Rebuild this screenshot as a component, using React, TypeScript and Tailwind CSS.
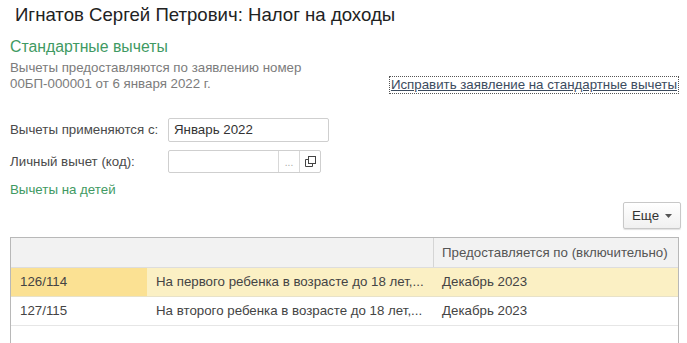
export default function App() {
  return (
    <div className="w-[687px] h-[343px] overflow-hidden bg-white text-[#333] font-['Liberation_Sans',Arial,sans-serif] relative">
      <h1 className="pl-[15px] pt-[3px] text-[18.6px] leading-[24px] text-[#222]">
        Игнатов Сергей Петрович: Налог на доходы
      </h1>

      <div className="pl-[10px] mt-[11px] text-[15.8px] leading-[18px] text-[#3f9a63]">Стандартные вычеты</div>

      <div className="flex items-end pl-[10px] pr-[8px] mt-[4px]">
        <div className="text-[13.3px] leading-[16px] text-[#7c7c7c]">
          Вычеты предоставляются по заявлению номер
          <br />
          00БП-000001 от 6 января 2022 г.
        </div>
        <a
          href="#"
          className="ml-auto mb-[-2px] px-[1px] border border-dotted border-[#555] text-[13.3px] leading-[16px] text-[#3b4b5e] underline"
        >
          Исправить заявление на стандартные вычеты
        </a>
      </div>

      <div className="pl-[10px] mt-[26px] flex items-center h-[24px]">
        <span className="w-[158px] text-[13.3px] text-[#4a4a4a]">Вычеты применяются с:</span>
        <div className="w-[161px] h-[24px] border border-[#cfcfcf] rounded-[2px] px-[5px] text-[13.3px] leading-[22px] text-[#333]">
          Январь 2022
        </div>
      </div>

      <div className="pl-[10px] mt-[8px] flex items-center h-[23px]">
        <span className="w-[158px] text-[13.3px] text-[#4a4a4a]">Личный вычет (код):</span>
        <div className="flex w-[153px] h-[23px] border border-[#cfcfcf] rounded-[2px]">
          <div className="flex-1" />
          <div className="w-[21px] border-l border-[#d8d8d8] flex items-center justify-center text-[10px] text-[#aaa] pt-[2px]">...</div>
          <div className="w-[21px] border-l border-[#d8d8d8] flex items-center justify-center">
            <svg width="11" height="11" viewBox="0 0 11 11" fill="none" stroke="#444" strokeWidth="1">
              <rect x="3.5" y="0.5" width="7" height="7" />
              <path d="M3.5 3.5H0.5V10.5H7.5V7.5" />
            </svg>
          </div>
        </div>
      </div>

      <div className="pl-[10px] mt-[9px] text-[13.3px] leading-[16px] text-[#3f9a63]">Вычеты на детей</div>

      <div className="flex justify-end pr-[6px] mt-[4px]">
        <button className="h-[27px] w-[58px] border border-[#c8c8c8] rounded-[2px] bg-gradient-to-b from-white to-[#f0f0f0] shadow-[0_1px_1px_rgba(0,0,0,0.12)] text-[13.3px] text-[#333] flex items-center justify-center gap-[6px]">
          Еще
          <svg width="7" height="4" viewBox="0 0 7 4">
            <path d="M0 0H7L3.5 4Z" fill="#555" />
          </svg>
        </button>
      </div>

      <div className="ml-[10px] mr-[8px] mt-[8px] border border-[#b8b8b8] h-[120px]">
        <div className="flex h-[30px] bg-[#f2f2f2] border-b border-[#ddd] text-[13.3px] text-[#555]">
          <div className="w-[422px]" />
          <div className="flex-1 border-l border-[#d5d5d5] pl-[8px] flex items-center">Предоставляется по (включительно)</div>
        </div>
        <div className="flex h-[29px] bg-[#fbf0c4] border-b border-[#e8e2c8] text-[13.3px] text-[#444] items-stretch">
          <div className="w-[136px] bg-[#fbe193] pl-[9px] flex items-center">126/114</div>
          <div className="w-[286px] pl-[9px] flex items-center whitespace-nowrap">На первого ребенка в возрасте до 18 лет,...</div>
          <div className="flex-1 pl-[9px] flex items-center">Декабрь 2023</div>
        </div>
        <div className="flex h-[29px] border-b border-[#e6e6e6] text-[13.3px] text-[#444] items-stretch">
          <div className="w-[136px] pl-[9px] flex items-center">127/115</div>
          <div className="w-[286px] pl-[9px] flex items-center whitespace-nowrap">На второго ребенка в возрасте до 18 лет,...</div>
          <div className="flex-1 pl-[9px] flex items-center">Декабрь 2023</div>
        </div>
      </div>
    </div>
  )
}
